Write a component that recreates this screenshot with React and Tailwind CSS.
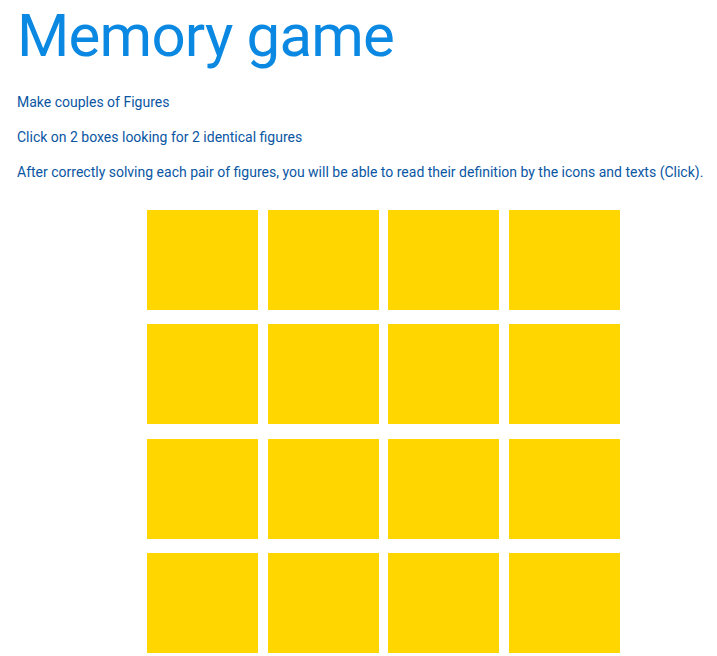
export default function App() {
  const tiles = Array.from({ length: 16 });
  return (
    <div className="min-h-screen bg-white font-['Roboto',sans-serif]">
      <div className="pl-[17px] pt-[6px]">
        <h1 className="text-[60px] leading-[60px] tracking-[-0.8px] text-[#0a88e2] font-normal">Memory game</h1>
        <div className="mt-[26px] flex flex-col gap-[15px] text-[14px] leading-[20px] text-[#0a56a3]">
          <p>Make couples of Figures</p>
          <p>Click on 2 boxes looking for 2 identical figures</p>
          <p>After correctly solving each pair of figures, you will be able to read their definition by the icons and texts (Click).</p>
        </div>
      </div>
      <div className="ml-[147px] mt-[28px] grid grid-cols-[repeat(4,111px)] gap-x-[9.7px] gap-y-[14.3px] pb-[3px]">
        {tiles.map((_, i) => (
          <div key={i} className="h-[100px] bg-[#ffd600]" />
        ))}
      </div>
    </div>
  );
}
